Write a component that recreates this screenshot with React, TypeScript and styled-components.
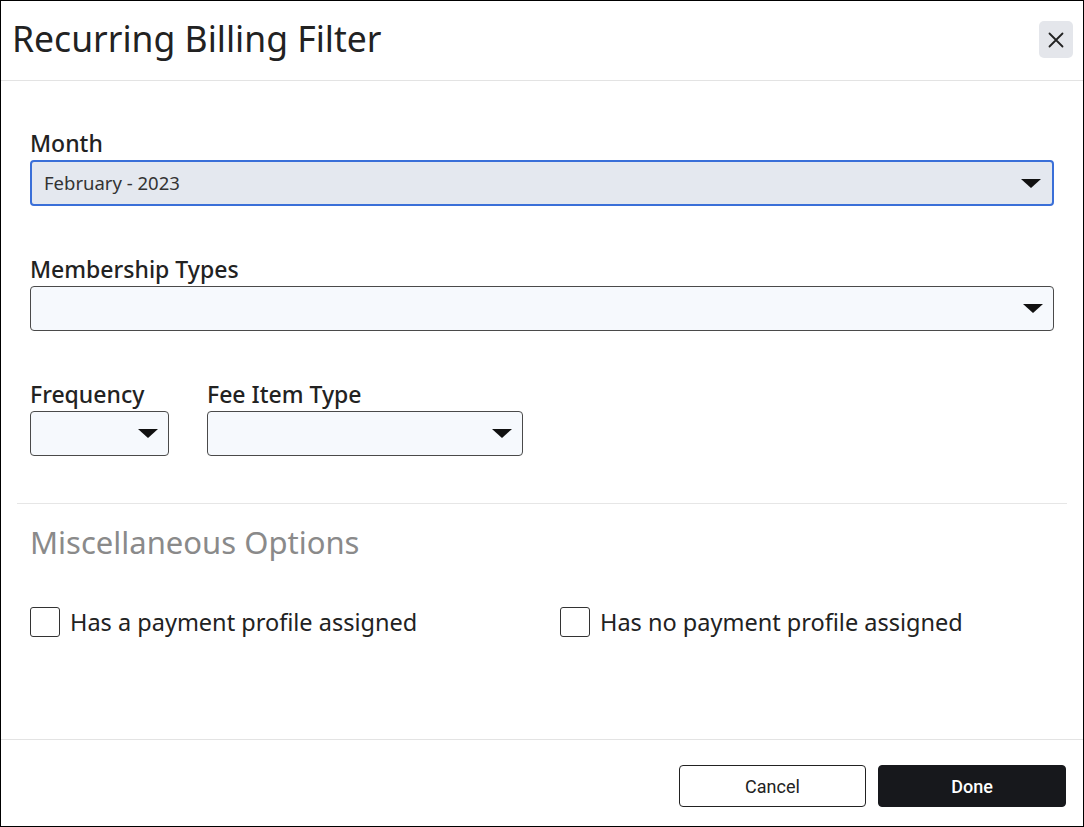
import React from "react";
import styled, { createGlobalStyle } from "styled-components";

const Global = createGlobalStyle`
  html, body { margin: 0; padding: 0; background: #fff; }
  * { box-sizing: border-box; }
  body { font-family: "Noto Sans", "Open Sans", sans-serif; color: #222; }
`;

const Dialog = styled.div`
  width: 1084px;
  height: 827px;
  border: 1px solid #000;
  display: flex;
  flex-direction: column;
  background: #fff;
`;

const Header = styled.div`
  height: 80px;
  border-bottom: 1px solid #e3e3e3;
  display: flex;
  align-items: center;
  justify-content: space-between;
  padding: 0 10px 6px 11px;
`;

const Title = styled.h1`
  margin: 0;
  font-size: 35.5px;
  font-weight: 400;
  color: #222;
  line-height: 46px;
`;

const CloseButton = styled.button`
  width: 34px;
  height: 37px;
  border: none;
  border-radius: 5px;
  background: #e4e6eb;
  display: flex;
  align-items: center;
  justify-content: center;
  padding: 0;
  margin-top: 4px;
  cursor: pointer;
`;

const Body = styled.div`
  flex: 1;
  padding: 49px 16px 0;
  display: flex;
  flex-direction: column;
`;

const Section = styled.div`
  padding: 0 13px;
  display: flex;
  flex-direction: column;
  gap: 50px;
`;

const Row = styled.div`
  display: flex;
  gap: 38px;
`;

const Field = styled.div<{ $width?: number }>`
  display: flex;
  flex-direction: column;
  width: ${(p) => (p.$width ? `${p.$width}px` : "100%")};
`;

const Label = styled.label`
  font-size: 23px;
  font-weight: 500;
  line-height: 27px;
  color: #222;
  margin-bottom: 3px;
`;

const Select = styled.div<{ $focused?: boolean }>`
  height: ${(p) => (p.$focused ? 46 : 45)}px;
  border: ${(p) => (p.$focused ? "2px solid #3a6fd8" : "1px solid #4a4a4a")};
  border-radius: 4px;
  background: ${(p) => (p.$focused ? "#e4e8ef" : "#f6f9fd")};
  display: flex;
  align-items: center;
  justify-content: space-between;
  padding: 0 ${(p) => (p.$focused ? 11 : 10)}px 0 ${(p) => (p.$focused ? 12 : 13)}px;
  font-size: 18.5px;
  line-height: 24px;
  color: #333;
`;

const Caret = styled.span`
  width: 0;
  height: 0;
  border-left: 10px solid transparent;
  border-right: 10px solid transparent;
  border-top: 9px solid #111;
  margin-left: auto;
`;

const Divider = styled.hr`
  border: none;
  border-top: 1px solid #e6e6e6;
  margin: 47px 0 0;
  width: 100%;
`;

const SectionTitle = styled.h2`
  margin: 18px 13px 0;
  font-size: 31px;
  font-weight: 400;
  line-height: 40px;
  color: #8a8a8a;
`;

const CheckRow = styled.div`
  display: grid;
  grid-template-columns: 530px 1fr;
  padding: 0 13px;
  margin-top: 45px;
`;

const CheckItem = styled.label`
  display: flex;
  align-items: center;
  gap: 10px;
  font-size: 23.5px;
  line-height: 30px;
  color: #222;
`;

const Box = styled.span`
  width: 30px;
  height: 30px;
  border: 1px solid #333;
  border-radius: 3px;
  background: #fff;
  flex-shrink: 0;
`;

const Footer = styled.div`
  height: 87px;
  border-top: 1px solid #e3e3e3;
  display: flex;
  justify-content: flex-end;
  align-items: flex-start;
  gap: 12px;
  padding: 25px 17px 0 0;
`;

const Button = styled.button<{ $primary?: boolean }>`
  width: ${(p) => (p.$primary ? 188 : 187)}px;
  height: 42px;
  border-radius: 4px;
  font-family: Roboto, "Liberation Sans", sans-serif;
  font-size: 18px;
  font-weight: ${(p) => (p.$primary ? 500 : 400)};
  border: 1px solid ${(p) => (p.$primary ? "#17181c" : "#222")};
  background: ${(p) => (p.$primary ? "#17181c" : "#fff")};
  color: ${(p) => (p.$primary ? "#fff" : "#222")};
  cursor: pointer;
`;

export default function App() {
  return (
    <>
      <Global />
      <Dialog>
        <Header>
          <Title>Recurring Billing Filter</Title>
          <CloseButton aria-label="Close">
            <svg width="16" height="16" viewBox="0 0 16 16">
              <path d="M1.5 1.5 L14.5 14.5 M14.5 1.5 L1.5 14.5" stroke="#222" strokeWidth="1.8" strokeLinecap="round" />
            </svg>
          </CloseButton>
        </Header>
        <Body>
          <Section>
            <Field>
              <Label>Month</Label>
              <Select $focused>
                <span>February - 2023</span>
                <Caret />
              </Select>
            </Field>
            <Field>
              <Label>Membership Types</Label>
              <Select>
                <Caret />
              </Select>
            </Field>
            <Row>
              <Field $width={139}>
                <Label>Frequency</Label>
                <Select>
                  <Caret />
                </Select>
              </Field>
              <Field $width={316}>
                <Label>Fee Item Type</Label>
                <Select>
                  <Caret />
                </Select>
              </Field>
            </Row>
          </Section>
          <Divider />
          <SectionTitle>Miscellaneous Options</SectionTitle>
          <CheckRow>
            <CheckItem>
              <Box />
              Has a payment profile assigned
            </CheckItem>
            <CheckItem>
              <Box />
              Has no payment profile assigned
            </CheckItem>
          </CheckRow>
        </Body>
        <Footer>
          <Button>Cancel</Button>
          <Button $primary>Done</Button>
        </Footer>
      </Dialog>
    </>
  );
}
